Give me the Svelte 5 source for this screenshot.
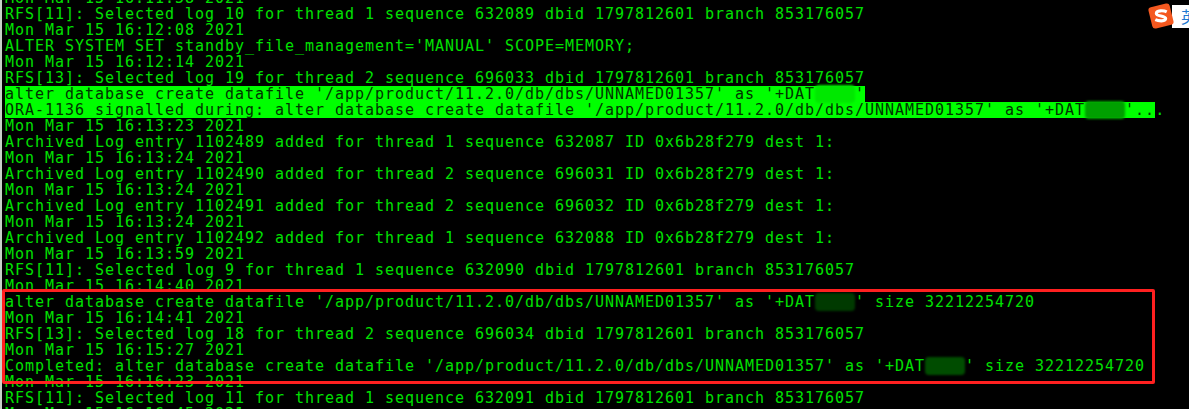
<script>
    const lines = [
        'Mon Mar 15 16:11:58 2021',
        'RFS[11]: Selected log 10 for thread 1 sequence 632089 dbid 1797812601 branch 853176057',
        'Mon Mar 15 16:12:08 2021',
        "ALTER SYSTEM SET standby_file_management='MANUAL' SCOPE=MEMORY;",
        'Mon Mar 15 16:12:14 2021',
        'RFS[13]: Selected log 19 for thread 2 sequence 696033 dbid 1797812601 branch 853176057'
    ];
    const afterHighlight = [
        'Mon Mar 15 16:13:23 2021',
        'Archived Log entry 1102489 added for thread 1 sequence 632087 ID 0x6b28f279 dest 1:',
        'Mon Mar 15 16:13:24 2021',
        'Archived Log entry 1102490 added for thread 2 sequence 696031 ID 0x6b28f279 dest 1:',
        'Mon Mar 15 16:13:24 2021',
        'Archived Log entry 1102491 added for thread 2 sequence 696032 ID 0x6b28f279 dest 1:',
        'Mon Mar 15 16:13:24 2021',
        'Archived Log entry 1102492 added for thread 1 sequence 632088 ID 0x6b28f279 dest 1:',
        'Mon Mar 15 16:13:59 2021',
        'RFS[11]: Selected log 9 for thread 1 sequence 632090 dbid 1797812601 branch 853176057',
        'Mon Mar 15 16:14:40 2021'
    ];
    const path = "create datafile '/app/product/11.2.0/db/dbs/UNNAMED01357' as '+DAT";
</script>

<div class="terminal">
    <div class="log">
        {#each lines as l}<div class="row">{l}</div>{/each}
        <div class="row"><span class="hl">alter database {path}<span class="blob b1">ASMX</span>'</span></div>
        <div class="row"><span class="hl">ORA-1136 signalled during: alter database {path}<span class="blob b2">ASMX</span>'..</span>.</div>
        {#each afterHighlight as l}<div class="row">{l}</div>{/each}
        <div class="row">alter database {path}<span class="blob b3">ASMX</span>' size 32212254720</div>
        <div class="row">Mon Mar 15 16:14:41 2021</div>
        <div class="row">RFS[13]: Selected log 18 for thread 2 sequence 696034 dbid 1797812601 branch 853176057</div>
        <div class="row">Mon Mar 15 16:15:27 2021</div>
        <div class="row">Completed: alter database {path}<span class="blob b4">ASMX</span>' size 32212254720</div>
        <div class="row">Mon Mar 15 16:16:23 2021</div>
        <div class="row">RFS[11]: Selected log 11 for thread 1 sequence 632091 dbid 1797812601 branch 853176057</div>
        <div class="row">Mon Mar 15 16:16:45 2021</div>
    </div>

    <div class="redbox"></div>

    <div class="ime">
        <svg width="28" height="28" viewBox="0 0 27 27">
            <rect x="3" y="3" width="21" height="21" rx="3" fill="#f4581f" transform="rotate(-14 13.500 13.500)" />
            <path d="M19 9.500c-3-1.500-10-1.500-10 1.500s9 2 9 5-7 2.500-10 1" fill="none" stroke="#fff" stroke-width="3" />
        </svg>
        <span class="ime-label">英</span>
    </div>
</div>

<style>
    :global(body) {
        margin: 0;
        background: #000;
    }

    .terminal {
        position: relative;
        width: 1189px;
        height: 409px;
        overflow: hidden;
        background: #000;
    }

    .log {
        margin-top: -10px;
        border-left: 2px solid #c8d0c8;
        padding-left: 3px;
        font-family: "DejaVu Sans Mono", monospace;
        font-size: 15px;
        letter-spacing: 0.97px;
        line-height: 16px;
        color: #00e000;
    }

    .row {
        height: 16px;
        white-space: pre;
    }

    .hl {
        display: inline-block;
        height: 16px;
        background: #00ff00;
        color: #003300;
    }

    .blob {
        color: transparent;
        border-radius: 4px;
        filter: blur(1px);
    }

    .b1 {
        background: #00e800;
    }

    .b2 {
        background: #00a000;
    }

    .b3 {
        background: #003a00;
    }

    .b4 {
        background: #004c00;
    }

    .redbox {
        position: absolute;
        left: 2px;
        top: 289px;
        width: 1147px;
        height: 89px;
        border: 3px solid #ff2020;
        border-radius: 2px;
    }

    .ime {
        position: absolute;
        left: 1147px;
        top: 2px;
        display: flex;
        align-items: center;
    }

    .ime-label {
        flex: none;
        width: 30px;
        height: 23px;
        margin-left: -3px;
        padding-left: 9px;
        background: #fff;
        color: #1e78d2;
        font-family: "Noto Sans CJK SC", sans-serif;
        font-size: 16px;
        line-height: 22px;
    }

    .ime svg {
        position: relative;
        z-index: 1;
    }
</style>
